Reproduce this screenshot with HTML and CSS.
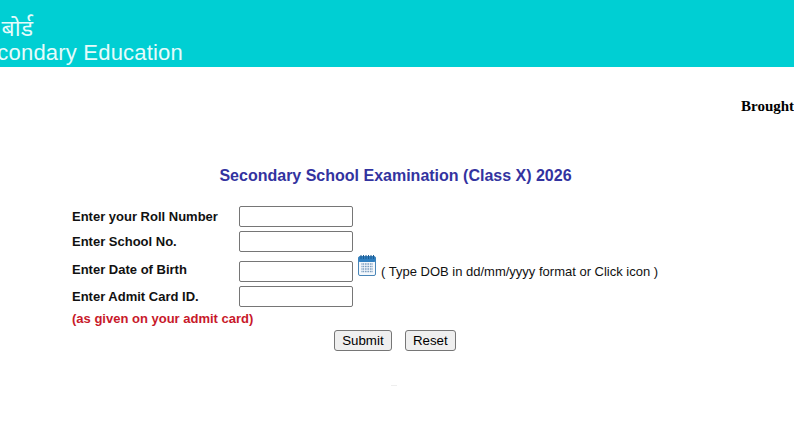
FILE: index.html
```html
<!DOCTYPE html>
<html lang="en">
	<head>
		<meta charset="UTF-8" />
		<meta name="viewport" content="width=device-width, initial-scale=1.0" />
		<title>Secondary School Examination (Class X) 2026</title>
		<link rel="stylesheet" href="styles.css">
	</head>
	<body>
		<header class="banner">
			<div class="banner__line banner__line--hi"><span>केन्द्रीय माध्यमिक शिक्षा बोर्ड</span></div>
			<div class="banner__line banner__line--en"><span>Central Board of Secondary Education</span></div>
		</header>

		<div class="credit">Brought to you by National Informatics Centre</div>

		<h1 class="title">Secondary School Examination (Class X) 2026</h1>

		<form class="form">
			<div class="row">
				<label class="row__label" for="roll">Enter your Roll Number</label>
				<input class="field" id="roll" type="text">
			</div>
			<div class="row">
				<label class="row__label" for="school">Enter School No.</label>
				<input class="field" id="school" type="text">
			</div>
			<div class="row row--dob">
				<label class="row__label" for="dob">Enter Date of Birth</label>
				<input class="field" id="dob" type="text">
				<svg class="calendar" width="18" height="21" viewBox="0 0 18 21">
					<rect x="0.5" y="1.5" width="17" height="19" rx="1.5" fill="#f4f8fc" stroke="#4a86b8"/>
					<rect x="0.5" y="1.5" width="17" height="5.5" rx="1.5" fill="#2f7fc0"/>
					<path d="M3 0v4M5.5 0v4M8 0v4M10.5 0v4M13 0v4M15.5 0v4" stroke="#1d5d94" stroke-width="1"/>
					<path d="M3 9h12M3 11.5h12M3 14h12M3 16.5h12" stroke="#7d9fc0" stroke-width="1.3"/>
					<path d="M4 8v10M6.5 8v10M9 8v10M11.5 8v10M14 8v10" stroke="#f4f8fc" stroke-width="0.8"/>
				</svg>
				<span class="hint">( Type DOB in dd/mm/yyyy format or Click icon )</span>
			</div>
			<div class="row">
				<label class="row__label" for="admit">Enter Admit Card ID.</label>
				<input class="field" id="admit" type="text">
			</div>
			<div class="note">(as given on your admit card)</div>
			<div class="actions">
				<input class="btn" type="submit" value="Submit">
				<input class="btn" type="reset" value="Reset">
			</div>
		</form>

		<div class="speck"></div>
	</body>
</html>
```

FILE: styles.css
```css
html, body {
	overflow: hidden;
}
body {
	margin: 0;
	height: 447px;
	background-color: #fff;
	font-family: "Liberation Sans", Arial, sans-serif;
	color: #111;
}

.banner {
	height: 67px;
	overflow: hidden;
	background-color: #00cfd3;
	color: #e6fbfb;
	white-space: nowrap;
}
/* both lines are pinned by their right end, the left part runs off the page */
.banner__line {
	display: flex;
	justify-content: flex-end;
}
.banner__line span {
	flex: none;
}
.banner__line--hi {
	width: 33px;
	height: 24px;
	margin-top: 15px;
	font-family: "Noto Sans", "Liberation Sans", sans-serif;
	font-size: 23px;
	line-height: 24px;
	word-spacing: 6px;
}
.banner__line--en {
	width: 183px;
	margin-top: 2px;
	font-size: 22px;
	line-height: 24px;
	letter-spacing: 0.2px;
}

.credit {
	margin: 30px 0 0 741px;
	width: 400px;
	white-space: nowrap;
	font-family: "Liberation Serif", "Times New Roman", serif;
	font-size: 15px;
	font-weight: bold;
	line-height: 18px;
	color: #000;
}

.title {
	margin: 51px 0 0;
	padding-right: 3px;
	text-align: center;
	font-size: 16px;
	font-weight: bold;
	line-height: 20px;
	color: #3333a0;
}

.form {
	display: flex;
	flex-direction: column;
	gap: 4px;
	margin: 20px 0 0 72px;
}
.row {
	display: flex;
	align-items: flex-start;
}
.row--dob {
	margin-top: 5px;
}
.row__label {
	flex: none;
	width: 167px;
	font-size: 13px;
	font-weight: bold;
	line-height: 21px;
	color: #111;
}
.row--dob .row__label {
	margin-top: -2px;
}
.field {
	flex: none;
	box-sizing: border-box;
	width: 114px;
	height: 21px;
	margin: 0;
	padding: 1px 2px;
	border: 1px solid #767676;
	border-radius: 2px;
	background-color: #fff;
}
.calendar {
	flex: none;
	margin: -6px 0 0 5px;
}
.hint {
	margin-left: 5px;
	font-size: 13px;
	line-height: 21px;
	color: #111;
}
.note {
	font-size: 13px;
	font-weight: bold;
	line-height: 16px;
	color: #c8192a;
}
.actions {
	display: flex;
	gap: 13px;
	margin: -1px 0 0 262px;
}
.btn {
	box-sizing: border-box;
	height: 21px;
	margin: 0;
	padding: 1px 7.2px;
	border: 1px solid #767676;
	border-radius: 3px;
	background-color: #efefef;
	font-family: "Liberation Sans", Arial, sans-serif;
	font-size: 13.3px;
	color: #000;
}

.speck {
	width: 6px;
	height: 1px;
	margin: 34px 0 0 391px;
	background-color: #eeeeee;
}
```
